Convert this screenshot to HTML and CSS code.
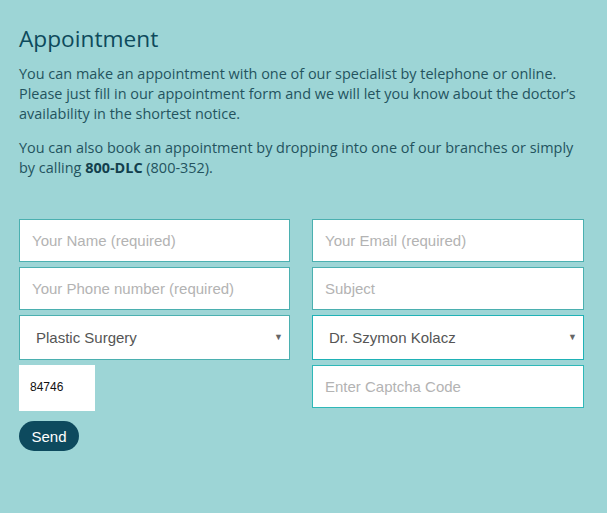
FILE: index.html
```html
<!DOCTYPE html>
<html>
<head>
<meta charset="utf-8">
<link rel="stylesheet" href="styles.css">
</head>
<body>
<div class="page">
  <h1 class="title">Appointment</h1>
  <p class="text">You can make an appointment with one of our specialist by telephone or online. Please just fill in our appointment form and we will let you know about the doctor’s availability in the shortest notice.</p>
  <p class="text">You can also book an appointment by dropping into one of our branches or simply by calling <b>800-DLC</b> (800-352).</p>
  <form class="form">
    <div class="grid">
      <input class="field" type="text" placeholder="Your Name (required)">
      <input class="field" type="text" placeholder="Your Email (required)">
      <input class="field" type="text" placeholder="Your Phone number (required)">
      <input class="field" type="text" placeholder="Subject">
      <div class="select"><span>Plastic Surgery</span><span class="arrow">▼</span></div>
      <div class="select alt"><span>Dr. Szymon Kolacz</span><span class="arrow">▼</span></div>
      <div class="captcha-cell"><div class="captcha">84746</div></div>
      <input class="field alt" type="text" placeholder="Enter Captcha Code">
    </div>
    <button class="send" type="button">Send</button>
  </form>
</div>
</body>
</html>
```
FILE: styles.css
```css
html, body {
  margin: 0;
  padding: 0;
  background: #9dd5d6;
}
.page {
  padding: 22px 23px 0 19px;
  font-family: "Open Sans", sans-serif;
}
.title {
  margin: 0 0 8px;
  font-size: 22.7px;
  font-weight: 400;
  line-height: 34px;
  color: #0d4a5c;
}
.text {
  margin: 0 0 14px;
  font-size: 14.45px;
  line-height: 20px;
  color: #23535e;
}
.text b {
  font-weight: 700;
  color: #123f4d;
}
.form {
  margin-top: 41px;
}
.grid {
  display: grid;
  grid-template-columns: 271px 272px;
  column-gap: 22px;
  row-gap: 5px;
}
.field, .select {
  box-sizing: border-box;
  height: 43px;
  background: #fff;
  border: 1px solid #4bb0b0;
  font-family: "Liberation Sans", Arial, sans-serif;
  font-size: 15px;
  padding: 0 12px;
  margin: 0;
  outline: none;
  width: 100%;
}
.field::placeholder {
  color: #b3b3b3;
}
.field.alt {
  border-color: #2fb8b8;
}
.select {
  height: 45px;
  display: flex;
  align-items: center;
  justify-content: space-between;
  padding: 0 6px 0 16px;
  color: #555;
}
.select.alt {
  border-color: #1fb2b6;
}
.arrow {
  font-size: 9px;
  color: #666;
  margin-top: -2px;
}
.captcha-cell {
  display: flex;
}
.captcha {
  width: 76px;
  height: 46px;
  background: #fff;
  font-family: "Liberation Sans", Arial, sans-serif;
  font-size: 12px;
  color: #111;
  box-sizing: border-box;
  padding: 15px 0 0 11px;
}
.send {
  margin-top: 10px;
  width: 60px;
  height: 30px;
  border: none;
  border-radius: 15px;
  background: #0d4a5e;
  color: #fff;
  font-family: "Liberation Sans", Arial, sans-serif;
  font-size: 15px;
  padding: 0;
}
```
